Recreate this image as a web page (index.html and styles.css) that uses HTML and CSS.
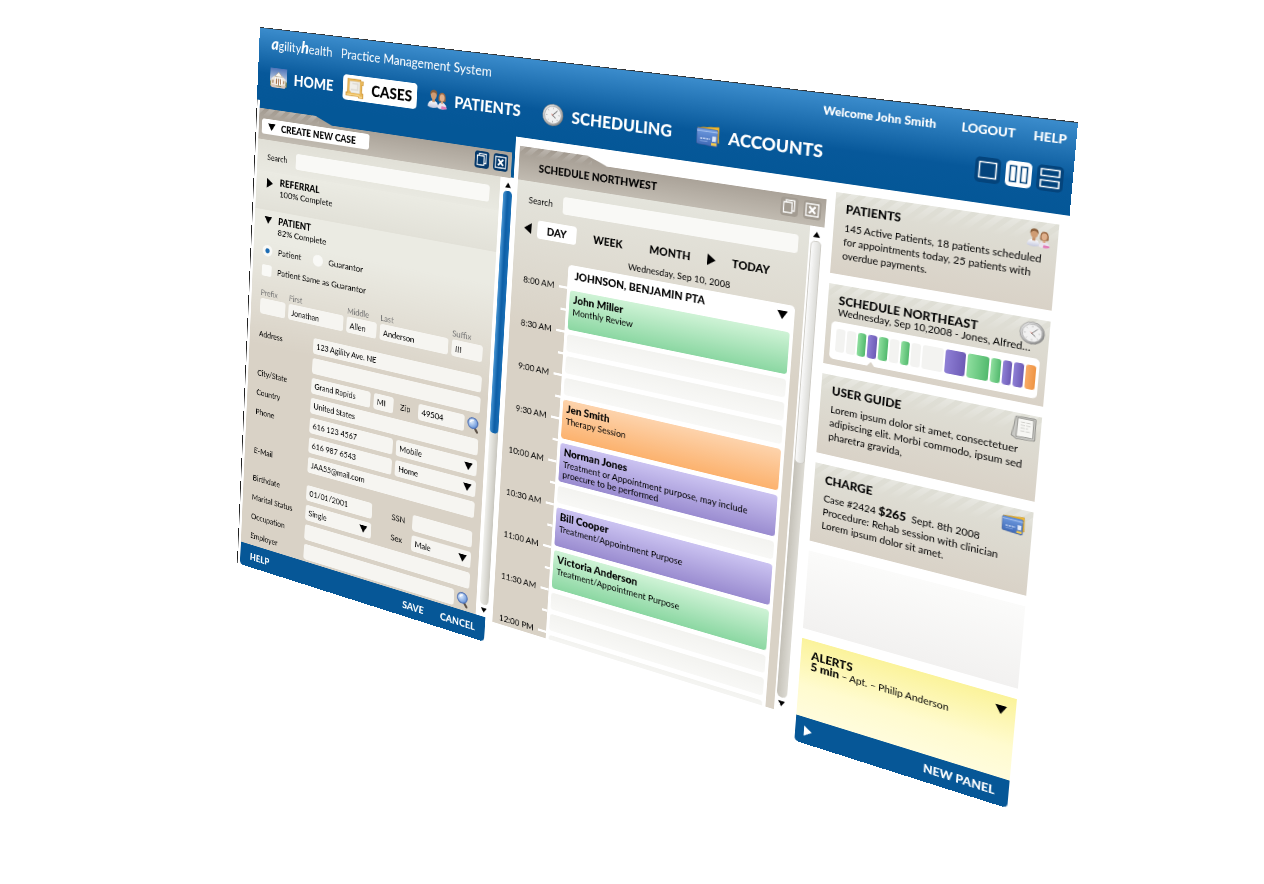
FILE: index.html
```html
<!DOCTYPE html>
<html lang="en">
<head>
<meta charset="utf-8">
<title>agilityhealth Practice Management System</title>
<link rel="stylesheet" href="styles.css">
</head>
<body>
<svg class="defs" aria-hidden="true">
  <defs>
    <linearGradient id="sky" x1="0" y1="0" x2="0" y2="1"><stop offset="0" stop-color="#4f74b8"/><stop offset="1" stop-color="#c9d6e8"/></linearGradient>
    <linearGradient id="steel" x1="0" y1="0" x2="1" y2="1"><stop offset="0" stop-color="#f4f4f4"/><stop offset="1" stop-color="#7d7d7d"/></linearGradient>
    <linearGradient id="cardblue" x1="0" y1="0" x2="0" y2="1"><stop offset="0" stop-color="#6f9be0"/><stop offset="1" stop-color="#3f69b5"/></linearGradient>
    <linearGradient id="shirt" x1="0" y1="0" x2="0" y2="1"><stop offset="0" stop-color="#ffffff"/><stop offset="1" stop-color="#c3c7dd"/></linearGradient>
    <radialGradient id="lens" cx="0.35" cy="0.35" r="0.7"><stop offset="0" stop-color="#e6f1ff"/><stop offset="1" stop-color="#5f8fd8"/></radialGradient>
    <symbol id="i-home" viewBox="0 0 28 28">
      <rect x="1" y="1" width="26" height="18" fill="url(#sky)"/>
      <path d="M1 19 Q4 14 8 18 L20 18 Q24 13 27 19 V25 Q14 29 1 25Z" fill="#8b8d58"/>
      <path d="M3 15 L8 11 H20 L25 15 V24 H3Z" fill="#efe9df"/>
      <path d="M8 12 L14 6 L20 12Z" fill="#faf7f0" stroke="#b5aa98" stroke-width=".8"/>
      <path d="M9.500 13V23M13 13V23M16 13V23M19 13V23" stroke="#fff" stroke-width="1.400"/>
      <path d="M11 15V22M14.500 15V24M17.500 15V22M5.500 17V21M22.500 17V21" stroke="#a0714a" stroke-width="1.600"/>
      <path d="M2 24 Q7 21 11 25 H18 Q22 21 26 24 L24 27 H4Z" fill="#d9c6bb"/>
    </symbol>
    <symbol id="i-case" viewBox="0 0 28 28">
      <path d="M3 2 H22 V4 H26 V9 H24 V20 H26 V26 H20 V24 H1 V20 H3Z" fill="#e9b95c" stroke="#c98e2b" stroke-width=".8"/>
      <path d="M6 5 H21 V20 H9 L6 17Z" fill="#f1efe9" stroke="#d8d2c2" stroke-width=".6"/>
      <path d="M10 8H18V16H8" fill="none" stroke="#dedbd4" stroke-width="2"/>
      <path d="M2 22.500 H20 L21 24.500 H25" fill="none" stroke="#f8d685" stroke-width="1.500"/>
    </symbol>
    <symbol id="i-people" viewBox="0 0 30 28">
      <path d="M1 24 Q2 16 9 16 Q16 16 17 24 Q9 28 1 24Z" fill="url(#shirt)"/>
      <path d="M16 25 Q16 18 22 17 Q29 18 29.500 25 Q22 28 16 25Z" fill="#e9e4ee"/>
      <path d="M22 22 L29 23 L29.500 25 Q26 27 21 26Z" fill="#e27bb8"/>
      <rect x="7.500" y="12" width="4" height="6" fill="#c48f68"/>
      <ellipse cx="9.500" cy="8.500" rx="4.600" ry="6" fill="#cf9c73"/>
      <path d="M4.500 9 Q3.500 1.500 9.500 1.500 Q15.500 1.500 14.500 9 Q13 5 9.500 5 Q6 5 4.500 9Z" fill="#8a5f3c"/>
      <rect x="20.500" y="13" width="3.500" height="6" fill="#d9a681"/>
      <path d="M17 15 Q16 4 22 4 Q28 4 27.500 15 Q26 17 24 16 L20 16 Q18 17 17 15Z" fill="#9c6a45"/>
      <ellipse cx="22" cy="11" rx="3.600" ry="4.800" fill="#dfb08c"/>
    </symbol>
    <symbol id="i-clock" viewBox="0 0 30 30">
      <circle cx="15" cy="15" r="14" fill="url(#steel)" stroke="#777" stroke-width=".6"/>
      <circle cx="15" cy="15" r="11.300" fill="#f1f1f1" stroke="#b5b5b5"/>
      <path d="M15 5.500V7.500M15 22.500V24.500M5.500 15H7.500M22.500 15H24.500M8.300 8.300 9.500 9.500M20.500 20.500 21.700 21.700M21.700 8.300 20.500 9.500M8.300 21.700 9.500 20.500" stroke="#a5a5a5" stroke-width=".8"/>
      <path d="M14 16 L20.500 9.500M14.500 15.500 L19 19" stroke="#666" stroke-width="1"/>
      <path d="M13 13.500 L15.200 15.800" fill="none" stroke="#d9776c" stroke-width="1"/>
    </symbol>
    <symbol id="i-cards" viewBox="0 0 32 28">
      <path d="M2 4 L30 1 L31 22 L8 24Z" fill="#f0b92f" stroke="#b98716" stroke-width=".6"/>
      <path d="M1 6 Q1 4.500 2.500 4.500 L27 4.800 Q28.500 4.900 28.600 6.300 L29 26 Q29 27.500 27.500 27.500 L3 25.500 Q1.500 25.400 1.500 24Z" fill="url(#cardblue)" stroke="#39558f" stroke-width=".6"/>
      <path d="M1.300 8 L28.700 8.500" stroke="#9fbcec" stroke-width="1.500"/>
      <path d="M6 18H19" stroke="#c3d4f3" stroke-width="2" stroke-dasharray="3 1"/>
      <path d="M6 21.500H16" stroke="#86a6df" stroke-width="1"/>
      <rect x="22" y="14" width="5" height="7" fill="#dfe8f7"/>
      <rect x="21" y="22.500" width="7" height="3.500" fill="#f3c94b"/>
    </symbol>
    <symbol id="i-book" viewBox="0 0 24 26">
      <path d="M4 2 L21 1 Q22.500 1 22.600 2.500 L23 22 Q23 24 21 24 L6 25 L1 22 Q3 12 4 2Z" fill="#c9c9c5" stroke="#8c8c88" stroke-width=".8"/>
      <path d="M6 3 H20.500 L21 21.500 L5.500 22.500Z" fill="#f7f7f4" stroke="#8f8f8b" stroke-width=".8"/>
      <path d="M9 7H18M9 10H18M9 13H16M9 16H18" stroke="#cfcfca" stroke-width="1" stroke-dasharray="4 1"/>
    </symbol>
    <symbol id="i-find" viewBox="0 0 18 22">
      <path d="M10.500 14 L14.500 19.500" stroke="#5b5046" stroke-width="3" stroke-linecap="round"/>
      <circle cx="8" cy="8.500" r="7" fill="url(#lens)" stroke="#5273b4" stroke-width="1.500"/>
      <path d="M4.500 8 Q5 4.500 9 4.500" fill="none" stroke="#fff" stroke-width="1.500"/>
    </symbol>
    <symbol id="i-copy" viewBox="0 0 20 22">
      <path d="M3.500 6 H13 V18 H3.500Z M6 6 V3.500 H15.800 V15.500 H13" fill="none" stroke="currentColor" stroke-width="1.300"/>
    </symbol>
    <symbol id="i-close" viewBox="0 0 20 22">
      <path d="M3 4 H17 V18 H3Z" fill="none" stroke="currentColor" stroke-width="1.300"/>
      <path d="M6.500 7 L13.500 15 M13.500 7 L6.500 15" stroke="currentColor" stroke-width="2.500"/>
    </symbol>
    <symbol id="i-one" viewBox="0 0 26 28"><path d="M4.500 5.500 H21.500 V22.500 H4.500Z" fill="none" stroke="currentColor" stroke-width="1.500"/></symbol>
    <symbol id="i-cols" viewBox="0 0 26 28"><path d="M4.500 5.500 H10.500 V22.500 H4.500Z M15.500 5.500 H21.500 V22.500 H15.500Z" fill="none" stroke="currentColor" stroke-width="1.500"/></symbol>
    <symbol id="i-rows" viewBox="0 0 26 28"><path d="M4 4.500 H22 V11.500 H4Z M4 16.500 H22 V23.500 H4Z" fill="none" stroke="currentColor" stroke-width="1.500"/></symbol>
    <symbol id="i-down" viewBox="0 0 12 10"><path d="M0 0H12L6 10Z" fill="currentColor"/></symbol>
    <symbol id="i-up" viewBox="0 0 12 10"><path d="M0 10H12L6 0Z" fill="currentColor"/></symbol>
    <symbol id="i-right" viewBox="0 0 10 14"><path d="M0 0V14L10 7Z" fill="currentColor"/></symbol>
    <symbol id="i-left" viewBox="0 0 10 14"><path d="M10 0V14L0 7Z" fill="currentColor"/></symbol>
  </defs>
</svg>

<div class="stage">
<div class="app">
  <header class="top">
    <div class="brand-row">
      <h1 class="brand"><span class="logo"><b>a</b>gility<b>h</b>ealth</span><span>Practice Management System</span></h1>
      <div class="account"><span class="welcome">Welcome John Smith</span><a href="#">LOGOUT</a><a href="#">HELP</a></div>
    </div>
    <div class="nav-row">
      <nav class="nav">
        <a href="#"><svg class="nav-icon"><use href="#i-home"/></svg>HOME</a>
        <a href="#" class="current"><svg class="nav-icon"><use href="#i-case"/></svg>CASES</a>
        <a href="#"><svg class="nav-icon"><use href="#i-people"/></svg>PATIENTS</a>
        <a href="#" class="spaced"><svg class="nav-icon"><use href="#i-clock"/></svg>SCHEDULING</a>
        <a href="#" class="spaced"><svg class="nav-icon"><use href="#i-cards"/></svg>ACCOUNTS</a>
      </nav>
      <div class="layouts">
        <button type="button" aria-label="One pane"><svg><use href="#i-one"/></svg></button>
        <button type="button" class="on" aria-label="Two columns"><svg><use href="#i-cols"/></svg></button>
        <button type="button" aria-label="Two rows"><svg><use href="#i-rows"/></svg></button>
      </div>
    </div>
  </header>

  <main class="workspace">
    <section class="pane pane-active">
      <div class="strip">
        <button type="button" class="title-pill"><svg class="tri"><use href="#i-down"/></svg>CREATE NEW CASE</button>
        <div class="win-buttons">
          <button type="button" aria-label="Duplicate"><svg><use href="#i-copy"/></svg></button>
          <button type="button" aria-label="Close"><svg><use href="#i-close"/></svg></button>
        </div>
      </div>
      <div class="pane-main">
        <div class="case">
          <div class="search"><label for="s1">Search</label><input id="s1" type="text"></div>
          <div class="section referral">
            <svg class="tri-r"><use href="#i-right"/></svg>
            <div><h2>REFERRAL</h2><p>100% Complete</p></div>
          </div>
          <div class="section patient">
            <svg class="tri"><use href="#i-down"/></svg>
            <div><h2>PATIENT</h2><p>82% Complete</p></div>
          </div>
          <form class="form">
            <div class="picks">
              <label><input type="radio" name="who" checked>Patient</label>
              <label><input type="radio" name="who">Guarantor</label>
            </div>
            <div class="picks second"><label><input type="checkbox">Patient Same as Guarantor</label></div>
            <div class="names">
              <label>Prefix<input type="text"></label>
              <label>First<input type="text" value="Jonathan"></label>
              <label>Middle<input type="text" value="Allen"></label>
              <label>Last<input type="text" value="Anderson"></label>
              <label>Suffix<input type="text" value="III"></label>
            </div>
            <div class="rows">
              <label for="addr">Address</label>
              <div class="fields"><input id="addr" type="text" value="123 Agility Ave. NE"></div>
              <span></span>
              <div class="fields"><input type="text" aria-label="Address line 2"></div>
              <label for="city">City/State</label>
              <div class="fields city"><input id="city" type="text" value="Grand Rapids"><input type="text" aria-label="State" value="MI"><label for="zip">Zip</label><input id="zip" type="text" value="49504"><button type="button" class="find" aria-label="Find zip"><svg><use href="#i-find"/></svg></button></div>
              <label for="country">Country</label>
              <div class="fields"><input id="country" type="text" value="United States"></div>
              <label for="phone">Phone</label>
              <div class="fields phone"><input id="phone" type="text" value="616 123 4567"><div class="pick"><select aria-label="Phone type"><option>Mobile</option></select><svg class="tri"><use href="#i-down"/></svg></div></div>
              <span></span>
              <div class="fields phone"><input type="text" aria-label="Second phone" value="616 987 6543"><div class="pick"><select aria-label="Second phone type"><option>Home</option></select><svg class="tri"><use href="#i-down"/></svg></div></div>
              <label for="mail">E-Mail</label>
              <div class="fields"><input id="mail" type="text" value="JAA55@mail.com"></div>
            </div>
            <div class="rows later">
              <label for="birth">Birthdate</label>
              <div class="fields pair"><input id="birth" type="text" value="01/01/2001"><label for="ssn">SSN</label><input id="ssn" type="text"></div>
              <label for="marital">Marital Status</label>
              <div class="fields pair"><div class="pick"><select id="marital"><option>Single</option></select><svg class="tri"><use href="#i-down"/></svg></div><label for="sex">Sex</label><div class="pick"><select id="sex"><option>Male</option></select><svg class="tri"><use href="#i-down"/></svg></div></div>
              <label for="job">Occupation</label>
              <div class="fields"><input id="job" type="text"></div>
              <label for="emp">Employer</label>
              <div class="fields employer"><input id="emp" type="text"><button type="button" class="find" aria-label="Find employer"><svg><use href="#i-find"/></svg></button></div>
            </div>
          </form>
        </div>
        <div class="scroll blue"><svg><use href="#i-up"/></svg><div class="track"><div class="thumb"></div></div><svg><use href="#i-down"/></svg></div>
      </div>
      <footer class="bar"><button type="button">HELP</button><button type="button" class="push">SAVE</button><button type="button">CANCEL</button></footer>
    </section>

    <section class="pane pane-schedule">
      <div class="strip">
        <h2 class="strip-title">SCHEDULE NORTHWEST</h2>
        <div class="win-buttons">
          <button type="button" aria-label="Duplicate"><svg><use href="#i-copy"/></svg></button>
          <button type="button" aria-label="Close"><svg><use href="#i-close"/></svg></button>
        </div>
      </div>
      <div class="pane-main">
        <div class="schedule">
          <div class="search"><label for="s2">Search</label><input id="s2" type="text"></div>
          <div class="range">
            <button type="button" aria-label="Previous"><svg><use href="#i-left"/></svg></button>
            <button type="button" class="on">DAY</button>
            <button type="button" class="week">WEEK</button>
            <button type="button" class="month">MONTH</button>
            <button type="button" class="next" aria-label="Next"><svg><use href="#i-right"/></svg></button>
            <button type="button" class="today">TODAY</button>
          </div>
          <p class="date">Wednesday, Sep 10, 2008</p>
          <div class="day">
            <ol class="times">
              <li>8:00 AM</li><li>8:30 AM</li><li>9:00 AM</li><li>9:30 AM</li><li>10:00 AM</li><li>10:30 AM</li><li>11:00 AM</li><li>11:30 AM</li><li>12:00 PM</li>
            </ol>
            <div class="book">
              <div class="book-head"><h3>JOHNSON, BENJAMIN PTA</h3><svg class="tri"><use href="#i-down"/></svg></div>
              <article class="appt green"><h4>John Miller</h4><p>Monthly Review</p></article>
              <div class="slot"></div><div class="slot"></div><div class="slot"></div>
              <article class="appt orange"><h4>Jen Smith</h4><p>Therapy Session</p></article>
              <article class="appt purple"><h4>Norman Jones</h4><p>Treatment or Appointment purpose, may include<br>proecure to be performed</p></article>
              <div class="slot"></div>
              <article class="appt purple"><h4>Bill Cooper</h4><p>Treatment/Appointment Purpose</p></article>
              <article class="appt green"><h4>Victoria Anderson</h4><p>Treatment/Appointment Purpose</p></article>
              <div class="slot"></div><div class="slot"></div><div class="slot"></div>
            </div>
          </div>
        </div>
        <div class="scroll gray"><svg><use href="#i-up"/></svg><div class="track"><div class="thumb"></div></div><svg><use href="#i-down"/></svg></div>
      </div>
    </section>

    <aside class="cards">
      <article class="card striped"><h2>PATIENTS</h2><svg class="card-icon"><use href="#i-people"/></svg><p>145 Active Patients, 18 patients scheduled<br>for appointments today, 25 patients with<br>overdue payments.</p></article>
      <article class="card striped northeast"><h2>SCHEDULE NORTHEAST</h2><svg class="card-icon big"><use href="#i-clock"/></svg><p>Wednesday, Sep 10,2008 - Jones, Alfred…</p>
        <div class="mini"><i></i><i></i><i class="g"></i><i class="p here"></i><i class="g"></i><i></i><i class="g"></i><i></i><i class="wide"></i><i class="p wide"></i><i class="g wide"></i><i class="g"></i><i class="p"></i><i class="p"></i><i class="o"></i></div>
      </article>
      <article class="card striped"><h2>USER GUIDE</h2><svg class="card-icon big"><use href="#i-book"/></svg><p>Lorem ipsum dolor sit amet, consectetuer<br>adipiscing elit. Morbi commodo, ipsum sed<br>pharetra gravida,</p></article>
      <article class="card striped"><h2>CHARGE</h2><svg class="card-icon"><use href="#i-cards"/></svg><p>Case #2424 <b>$265</b>&nbsp; Sept. 8th 2008<br>Procedure: Rehab session with clinician<br>Lorem ipsum dolor sit amet.</p></article>
      <article class="card empty"></article>
      <article class="card alerts"><h2>ALERTS</h2><svg class="tri"><use href="#i-down"/></svg><p><b>5 min</b> – Apt. – Philip Anderson</p></article>
      <footer class="bar"><button type="button" aria-label="Expand"><svg><use href="#i-right"/></svg></button><button type="button" class="push">NEW PANEL</button></footer>
    </aside>
  </main>
</div>
</div>
</body>
</html>
```
FILE: styles.css
```css
* { box-sizing: border-box; }
body { margin: 0; background: #fff; color: #000; font-family: Lato, "Open Sans", sans-serif; font-size: 11px; line-height: 16px; }
h1, h2, h3, h4, p, ol { margin: 0; padding: 0; }
h2, h3, h4 { font-size: 13px; line-height: 16px; font-weight: 900; }
a { color: inherit; text-decoration: none; }
button, input, select { font: inherit; color: inherit; border: 0; margin: 0; padding: 0; background: none; min-width: 0; }
button { display: flex; align-items: center; justify-content: center; font-weight: 900; white-space: nowrap; }
svg { display: block; flex: none; }
.defs { position: absolute; width: 0; height: 0; }
.tri { width: 12px; height: 10px; }
.tri-r { width: 10px; height: 14px; }

.stage { min-height: 100vh; overflow: hidden; }

/* The whole screen is a flat board seen in perspective. */
.app {
  width: 1024px; height: 768px; display: flex; flex-direction: column;
  transform-origin: 0 0;
  transform: matrix3d(0.553125, 0.064971, 0, -0.00022793, -0.020234, 0.721003, 0, 0.000041, 0, 0, 1, 0, 260, 27, 0, 1);
}

.top { height: 101px; flex: none; padding: 7px 9px 0 20px; color: #fff; border-top: 1px solid #333; background: linear-gradient(#3b8ccc 0, #07589a 62px, #045797 100%); }
.brand-row { display: flex; justify-content: space-between; height: 32px; }
.brand { display: flex; gap: 13px; font-size: 17px; line-height: 30px; font-weight: 400; }
.logo b { font-size: 22px; font-weight: 900; font-style: italic; line-height: 20px; }
.account { display: flex; font-weight: 900; font-size: 13px; line-height: 24px; }
.account a + a { margin-left: 18px; }
.welcome { margin-right: 26px; }
.nav-row { display: flex; justify-content: space-between; padding-top: 10px; }
.nav { display: flex; gap: 8px; margin-left: -8px; font-size: 20px; font-weight: 900; }
.nav a { display: flex; align-items: center; gap: 10px; height: 34px; padding: 0 7px; border-radius: 5px; }
.nav a.spaced { margin-left: 7px; }
.nav .current { background: #fff; color: #000; padding-left: 4px; }
.nav-icon { width: 29px; height: 29px; }
.layouts { display: flex; gap: 5px; }
.layouts button { width: 26px; height: 28px; border-radius: 5px; background: #04447c; color: #fff; }
.layouts .on { background: #fff; color: #04447c; }
.layouts svg { width: 26px; height: 28px; }

.workspace { flex: 1; min-height: 0; display: grid; grid-template-columns: 388px 395px 1fr; }
.pane { display: flex; flex-direction: column; padding-top: 11px; min-height: 0; min-width: 0; }
.pane-active { border-left: 1px solid #222; background: linear-gradient(#045797, #045797) 4px 0 / 100% 53px no-repeat; padding-left: 4px; }
.pane-schedule { background: #fff; border-radius: 5px 0 0 0; padding: 11px 10px 30px 6px; }

.strip { height: 43px; flex: none; margin-right: 4px; padding: 6px 5px 0; display: flex; align-items: center; justify-content: space-between; position: relative; background: linear-gradient(#a39b91, #c1bbb1); clip-path: polygon(0 0, 90px 0, 116px 10px, 100% 10px, 100% 100%, 0 100%); }
.pane-schedule .strip { margin-right: 0; }
.strip::before, .striped::before { content: ""; position: absolute; inset: 0 0 auto; height: 22px; background: repeating-linear-gradient(135deg, #fff4 0 6px, #fff0 6px 12px); mask-image: linear-gradient(#000, #0000); }
.strip::before { right: auto; width: 96px; height: 12px; }
.title-pill { height: 21px; gap: 9px; padding: 0 20px 0 10px; background: #fff; border-radius: 4px; font-size: 13px; position: relative; }
.strip-title { margin-left: 22px; }
.win-buttons { display: flex; gap: 6px; }
.win-buttons button { width: 20px; height: 22px; border-radius: 4px; background: #a39c92; color: #fff; }
.win-buttons svg { width: 20px; height: 22px; }
.pane-active .win-buttons button { background: #05396b; }

.pane-main { flex: 1; min-height: 0; display: flex; justify-content: space-between; background: #fff; }
.search { height: 44px; padding: 13px 14px 9px 16px; display: flex; align-items: center; }
.search label { width: 46px; }
.search input { flex: 1; height: 22px; border-radius: 4px; background: #f9f9f6; }
.schedule .search { padding-right: 12px; }

.case { width: 365px; overflow: hidden; background: #d9d2c6; }
.case .search { background: linear-gradient(#e1e0d7, #e9e9e1); }
.section { display: flex; gap: 10px; padding: 6px 0 0 16px; font-size: 12px; }
.section h2 { line-height: 15px; }
.referral { height: 54px; background: linear-gradient(#ebebe3, #e2e1d8); }
.patient { height: 42px; background: #ebebe3; }
.section .tri, .section .tri-r { margin-top: 3px; }
.section .tri-r { width: 12px; }
.form { padding: 7px 11px 0 15px; background: linear-gradient(#ebebe3, #d9d2c6 150px); }
.picks { display: flex; gap: 18px; height: 28px; font-size: 12px; }
.picks label { display: flex; align-items: center; gap: 9px; height: 16px; line-height: 14px; }
.picks input { appearance: none; width: 16px; height: 16px; background: #f9f9f6; border-radius: 3px; }
.picks input[type=radio] { border-radius: 50%; }
.picks input[type=radio]:checked { background: radial-gradient(#1c6cb4 3px, #f9f9f6 4px); }
.names { display: grid; grid-template-columns: 41px 87px 46px 101px 1fr; gap: 5px; padding-top: 3px; color: #777; }
.names label { line-height: 17px; }
.form input[type=text], .form select { display: block; width: 100%; height: 22px; padding: 0 5px; border-radius: 4px; background: #f6f5f1; color: #000; }
.rows { display: grid; grid-template-columns: 88px 1fr; row-gap: 6px; padding-top: 18px; line-height: 22px; white-space: nowrap; }
.fields { display: grid; column-gap: 5px; height: 22px; }
.city { grid-template-columns: 92px 30px 27px 67px 16px; }
.city label { padding-left: 5px; }
.phone { grid-template-columns: 129px 1fr; }
.pair { grid-template-columns: 103px 51px 1fr; }
.pair label { padding-left: 25px; }
.employer { grid-template-columns: 1fr 16px; }
.find svg { width: 18px; height: 22px; }
.pick { position: relative; }
.pick select { appearance: none; }
.pick .tri { position: absolute; right: 6px; top: 6px; pointer-events: none; }

.scroll { width: 18px; padding: 6px 1px 5px 5px; display: flex; flex-direction: column; align-items: center; gap: 4px; }
.scroll svg { width: 8px; height: 7px; }
.track { flex: 1; width: 12px; border-radius: 6px; background: linear-gradient(90deg, #f0f0ec, #c9c7bf); }
.thumb { height: 58%; border-radius: 5px; background: linear-gradient(90deg, #4a97d4, #0c5ea6 50%, #1a6fb6); }
.gray { width: 16px; padding: 6px 2px; }
.gray .track { background: linear-gradient(90deg, #c4c1b8, #dddbd4); }
.gray .thumb { height: 48%; background: linear-gradient(90deg, #fafafa, #dcdcd8); border: 1px solid #cfcdc7; }

.bar { height: 33px; flex: none; margin-right: 4px; padding: 0 14px 0 16px; display: flex; align-items: center; gap: 24px; background: #065797; color: #fff; border-radius: 0 0 5px 5px; font-size: 13px; }
.push { margin-left: auto; }

.schedule { width: 363px; overflow: hidden; background: linear-gradient(#e4e4dc, #d9d2c6 190px); }
.range { display: flex; align-items: center; height: 23px; margin: 4px 0 0 12px; }
.range button { font-size: 13px; }
.range svg { width: 10px; height: 14px; }
.range .on { width: 52px; height: 23px; margin-left: 8px; background: #fff; border-radius: 4px; }
.range .week { margin-left: 22px; }
.range .month { margin-left: 34px; }
.range .next { margin-left: 20px; }
.range .today { margin-left: 20px; }
.date { height: 26px; padding: 7px 10px 0 74px; text-align: center; }
.day { display: flex; }
.times { list-style: none; width: 74px; padding-top: 21px; }
.times li { height: 56px; padding-right: 17px; text-align: right; position: relative; }
.times li::before, .times li::after { content: ""; position: absolute; right: 0; top: 7px; width: 11px; height: 3px; background: #fff; }
.times li::after { top: 35px; width: 7px; }
.book { width: 279px; padding: 0 4px; display: flex; flex-direction: column; gap: 6px; background: #fff; border-radius: 5px 5px 0 0; }
.book-head { height: 26px; padding: 0 4px 0 5px; display: flex; align-items: center; justify-content: space-between; }
.slot { height: 22px; flex: none; border-radius: 4px; background: linear-gradient(#f3f3f0, #f8f8f6); }
.appt { height: 50px; flex: none; padding: 3px 5px; border-radius: 4px; line-height: 13px; }
.appt h4 { line-height: 17px; }
.green { background: linear-gradient(#cff3d6, #8bd7a2); }
.orange { background: linear-gradient(#fdd3ac, #fcb26e); }
.purple { background: linear-gradient(#cbc3f1, #9a8cd0); }

.cards { padding: 11px 9px 0 0; display: flex; flex-direction: column; gap: 12px; background: #fff; }
.card { height: 94px; flex: none; padding: 10px 7px 0 12px; position: relative; display: grid; grid-template-columns: 1fr auto; align-content: start; white-space: nowrap; background: linear-gradient(#dfdfd6, #d9d2c7); }
.card p { grid-column: 1 / -1; grid-row: 2; margin-top: 6px; position: relative; }
.card b { font-size: 13px; line-height: 14px; font-weight: 900; }
.card-icon { grid-column: 2; grid-row: 1; width: 24px; height: 24px; margin: -4px 0 -20px; position: relative; }
.card-icon.big { width: 26px; height: 28px; margin-right: -3px; margin-top: -8px; }
.northeast p, .alerts p { margin-top: -2px; }
.mini { grid-column: 1 / -1; position: relative; height: 44px; margin: 3px 0 0 -6px; padding: 8px 3px 9px 6px; display: grid; grid-template-columns: repeat(18, 1fr); gap: 2px; background: #fff; border-radius: 5px; }
.mini i { border-radius: 3px; background: #f3f3f1; }
.mini .wide { grid-column: span 2; }
.mini .g { background: linear-gradient(90deg, #8fdf9f, #52b96d); }
.mini .p { background: linear-gradient(90deg, #8f80d6, #6d5bb5); }
.mini .o { background: linear-gradient(90deg, #f9ab67, #ee9443); }
.mini .here::after { content: ""; position: absolute; bottom: 0; margin-left: 1px; border: 4px solid transparent; border-top: 0; border-bottom: 5px solid #d9d3c8; }
.empty { background: linear-gradient(#fbfbfa, #f2f1f0); }
.alerts { background: linear-gradient(#fbf39b, #fffbcf 60%, #fffcdc); }
.alerts .tri { margin-right: 2px; margin-top: 2px; }
.cards .bar { margin: -12px 0 0; height: 32px; padding: 0 14px 0 10px; }
.cards .bar svg { width: 9px; height: 13px; }
```
